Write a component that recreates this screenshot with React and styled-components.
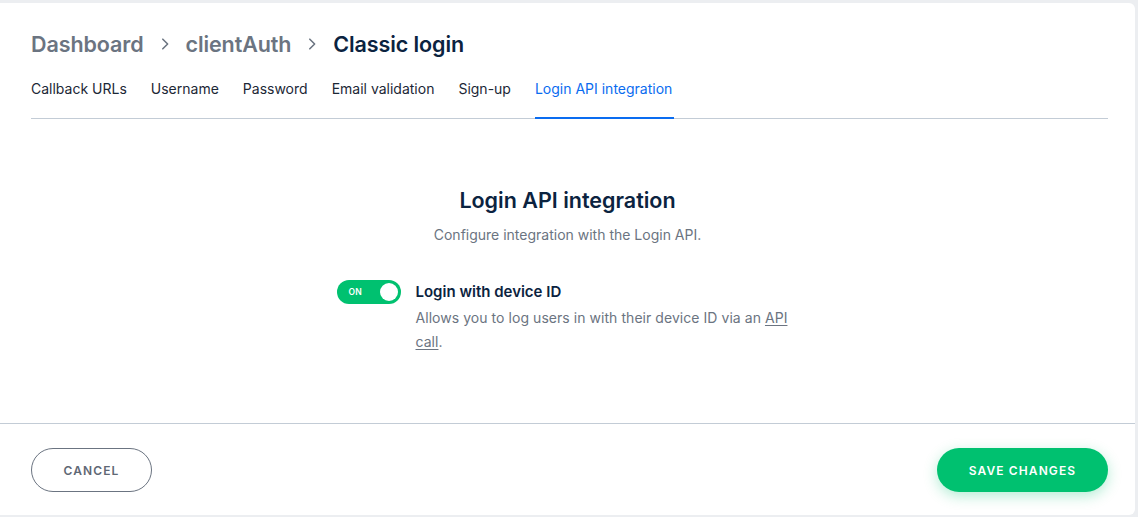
import React from "react";
import styled, { createGlobalStyle } from "styled-components";

const Global = createGlobalStyle`
  html, body { margin: 0; padding: 0; background: #eceef1; }
  body { font-family: Inter, "Noto Sans", "Liberation Sans", sans-serif; -webkit-font-smoothing: antialiased; }
  * { box-sizing: border-box; }
`;

const Card = styled.div`
  margin: 3px 3px 0 0;
  height: 512px;
  background: #fff;
  border-radius: 0 6px 6px 0;
  display: flex;
  flex-direction: column;
`;

const Header = styled.div`
  padding: 27px 27px 0 31px;
`;

const Breadcrumb = styled.div`
  display: flex;
  align-items: center;
  gap: 14px;
  font-size: 21.5px;
  font-weight: 600;
  line-height: 28px;
  letter-spacing: -0.1px;
`;

const Crumb = styled.span`
  color: ${p => (p.$current ? "#0b2340" : "#6b7481")};
`;

const Chevron = styled.svg`
  width: 14px;
  height: 14px;
  color: #6b7481;
`;

const Tabs = styled.div`
  margin-top: 21px;
  display: flex;
  gap: 24px;
  border-bottom: 1px solid #c3ccd6;
`;

const Tab = styled.div`
  font-size: 14px;
  line-height: 20px;
  padding: 0 ${p => (p.$active ? "2px" : "0")} 18px 0;
  color: ${p => (p.$active ? "#0a6cf0" : "#1c2736")};
  border-bottom: 2px solid ${p => (p.$active ? "#0a6cf0" : "transparent")};
  margin-bottom: -1px;
`;

const Body = styled.div`
  flex: 1;
  display: flex;
  flex-direction: column;
  align-items: center;
  padding-top: 67px;
`;

const Title = styled.h2`
  margin: 0;
  font-size: 21.5px;
  font-weight: 600;
  line-height: 28px;
  color: #0b2340;
`;

const Subtitle = styled.p`
  margin: 11px 0 0;
  font-size: 14px;
  line-height: 20px;
  color: #6b7481;
`;

const Option = styled.div`
  margin-top: 35px;
  width: 466px;
  display: flex;
  gap: 15px;
  align-items: flex-start;
  padding-left: 2px;
`;

const Toggle = styled.div`
  flex: none;
  width: 64px;
  height: 24px;
  border-radius: 12px;
  background: #00c170;
  display: flex;
  align-items: center;
  justify-content: space-between;
  padding: 0 3px 0 12px;
`;

const ToggleLabel = styled.span`
  font-size: 8.5px;
  font-weight: 600;
  color: #fff;
  letter-spacing: 0.2px;
`;

const Knob = styled.span`
  width: 18px;
  height: 18px;
  border-radius: 50%;
  background: #fff;
`;

const OptionText = styled.div`
  width: 380px;
  padding-top: 2px;
`;

const OptionTitle = styled.div`
  font-size: 15px;
  font-weight: 600;
  line-height: 20px;
  color: #0b2340;
`;

const OptionDesc = styled.div`
  margin-top: 4px;
  font-size: 14px;
  line-height: 24px;
  letter-spacing: 0.05px;
  color: #6b7481;
`;

const Link = styled.a`
  color: #6b7481;
  text-decoration: underline;
  text-underline-offset: 2px;
`;

const Footer = styled.div`
  border-top: 1px solid #c3ccd6;
  height: 92px;
  display: flex;
  align-items: center;
  justify-content: space-between;
  padding: 1px 27px 0 31px;
`;

const Button = styled.button`
  height: 44px;
  border-radius: 22px;
  font-family: inherit;
  font-size: 12px;
  font-weight: 600;
  letter-spacing: 1.1px;
  text-transform: uppercase;
  cursor: pointer;
  border: ${p => (p.$primary ? "none" : "1px solid #6b7481")};
  background: ${p => (p.$primary ? "#00c170" : "#fff")};
  color: ${p => (p.$primary ? "#fff" : "#5f6875")};
  width: ${p => p.$w}px;
  box-shadow: ${p => (p.$primary ? "0 4px 14px rgba(0, 193, 112, 0.3)" : "none")};
`;

const ChevronIcon = () => (
  <Chevron viewBox="0 0 16 16" fill="none">
    <path d="M5.5 2.5 L11 8 L5.5 13.5" stroke="currentColor" strokeWidth="1.8" strokeLinecap="round" strokeLinejoin="round" />
  </Chevron>
);

const tabs = ["Callback URLs", "Username", "Password", "Email validation", "Sign-up", "Login API integration"];

export default function App() {
  return (
    <>
      <Global />
      <Card>
        <Header>
          <Breadcrumb>
            <Crumb>Dashboard</Crumb>
            <ChevronIcon />
            <Crumb>clientAuth</Crumb>
            <ChevronIcon />
            <Crumb $current>Classic login</Crumb>
          </Breadcrumb>
          <Tabs>
            {tabs.map(t => (
              <Tab key={t} $active={t === "Login API integration"}>{t}</Tab>
            ))}
          </Tabs>
        </Header>
        <Body>
          <Title>Login API integration</Title>
          <Subtitle>Configure integration with the Login API.</Subtitle>
          <Option>
            <Toggle>
              <ToggleLabel>ON</ToggleLabel>
              <Knob />
            </Toggle>
            <OptionText>
              <OptionTitle>Login with device ID</OptionTitle>
              <OptionDesc>
                Allows you to log users in with their device ID via an <Link href="#">API</Link>{" "}
                <Link href="#">call</Link>.
              </OptionDesc>
            </OptionText>
          </Option>
        </Body>
        <Footer>
          <Button $w={121}>Cancel</Button>
          <Button $primary $w={171}>Save changes</Button>
        </Footer>
      </Card>
    </>
  );
}
